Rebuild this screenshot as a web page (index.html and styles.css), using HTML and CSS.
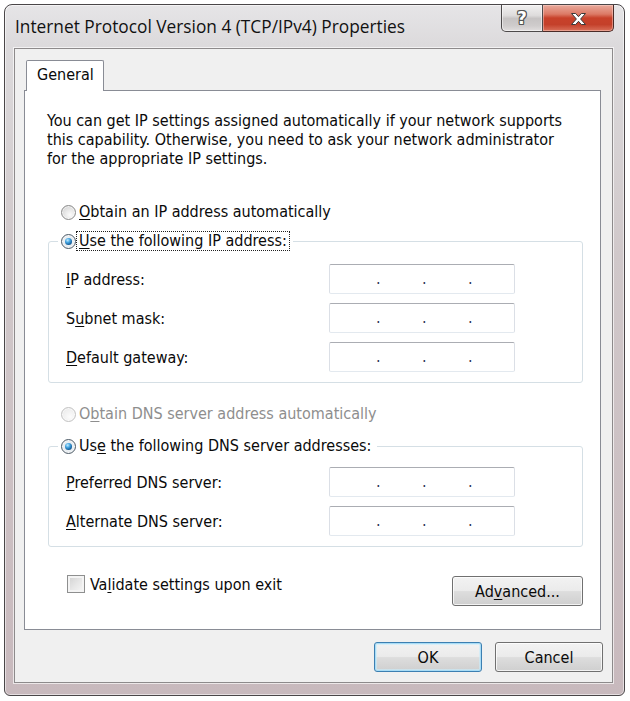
FILE: index.html
```html
<!DOCTYPE html>
<html>
<head>
<meta charset="utf-8">
<title>Internet Protocol Version 4 (TCP/IPv4) Properties</title>
<link rel="stylesheet" href="styles.css">
</head>
<body>
<div class="window">
  <div class="titlebar">
    <div class="title">Internet Protocol Version 4 (TCP/IPv4) Properties</div>
    <div class="caption-btns">
      <div class="cbtn help"><span class="qmark">?</span></div>
      <div class="cbtn close">
        <svg width="17" height="14" viewBox="0 0 17 14"><path d="M1.5 1.5h4.2l2.8 3.2 2.8-3.2h4.2l-4.9 5.5 4.9 5.5h-4.2l-2.8-3.2-2.8 3.2h-4.2l4.9-5.5z" fill="#fff" stroke="#3a3a3a" stroke-width="1" stroke-linejoin="round"/></svg>
      </div>
    </div>
  </div>
  <div class="client">
    <div class="tabs"><div class="tab">General</div></div>
    <div class="panel">
      <p class="intro">You can get IP settings assigned automatically if your network supports<br>this capability. Otherwise, you need to ask your network administrator<br>for the appropriate IP settings.</p>

      <div class="radio-row r-auto-ip"><span class="radio"></span><span class="rlabel"><u>O</u>btain an IP address automatically</span></div>

      <fieldset class="group g-ip">
        <legend><span class="radio checked"></span><span class="rlabel focus"><u>U</u>se the following IP address:</span></legend>
        <div class="rows">
          <div class="field-row"><span class="flabel"><u>I</u>P address:</span><div class="ipbox"><span class="seg first"></span><span class="dot">.</span><span class="seg"></span><span class="dot">.</span><span class="seg"></span><span class="dot">.</span><span class="seg"></span></div></div>
          <div class="field-row"><span class="flabel">S<u>u</u>bnet mask:</span><div class="ipbox"><span class="seg first"></span><span class="dot">.</span><span class="seg"></span><span class="dot">.</span><span class="seg"></span><span class="dot">.</span><span class="seg"></span></div></div>
          <div class="field-row"><span class="flabel"><u>D</u>efault gateway:</span><div class="ipbox"><span class="seg first"></span><span class="dot">.</span><span class="seg"></span><span class="dot">.</span><span class="seg"></span><span class="dot">.</span><span class="seg"></span></div></div>
        </div>
      </fieldset>

      <div class="radio-row r-auto-dns disabled"><span class="radio"></span><span class="rlabel">O<u>b</u>tain DNS server address automatically</span></div>

      <fieldset class="group g-dns">
        <legend><span class="radio checked"></span><span class="rlabel">Us<u>e</u> the following DNS server addresses:</span></legend>
        <div class="rows">
          <div class="field-row"><span class="flabel"><u>P</u>referred DNS server:</span><div class="ipbox"><span class="seg first"></span><span class="dot">.</span><span class="seg"></span><span class="dot">.</span><span class="seg"></span><span class="dot">.</span><span class="seg"></span></div></div>
          <div class="field-row"><span class="flabel"><u>A</u>lternate DNS server:</span><div class="ipbox"><span class="seg first"></span><span class="dot">.</span><span class="seg"></span><span class="dot">.</span><span class="seg"></span><span class="dot">.</span><span class="seg"></span></div></div>
        </div>
      </fieldset>

      <div class="bottom-row">
        <div class="check-row"><span class="checkbox"></span><span class="clabel">Va<u>l</u>idate settings upon exit</span></div>
        <button class="btn advanced" type="button">Ad<u>v</u>anced...</button>
      </div>
    </div>
    <div class="dialog-btns">
      <button class="btn default" type="button">OK</button>
      <button class="btn" type="button">Cancel</button>
    </div>
  </div>
</div>
</body>
</html>
```
FILE: styles.css
```css
* { box-sizing: border-box; }

html, body {
  margin: 0;
  padding: 0;
  background: #ffffff;
}

body {
  font-family: "DejaVu Sans Condensed", "Liberation Sans", sans-serif;
  font-size: 16px;
  color: #0a0a0a;
}

u {
  text-decoration-thickness: 1px;
  text-underline-offset: 2px;
}

/* ---------- window frame ---------- */
.window {
  margin: 4px 0 0 4px;
  width: 621px;
  height: 692px;
  border: 1px solid #4a4648;
  border-radius: 8px 8px 6px 6px;
  background: linear-gradient(180deg, #e6e5e7 0px, #dcdadc 40px, #d0c8ca 250px, #c8b9bd 100%);
  box-shadow: inset 0 0 0 1px rgba(255, 255, 255, 0.55);
  padding: 0 11px 12px 9px;
  display: flex;
  flex-direction: column;
}

.titlebar {
  height: 43px;
  display: flex;
  justify-content: space-between;
  align-items: flex-start;
}

.title {
  margin-top: 11px;
  margin-left: 1px;
  font-family: "Open Sans", "Noto Sans", sans-serif;
  font-size: 17.3px;
  line-height: 22px;
  color: #111111;
}

.caption-btns {
  display: flex;
  height: 27px;
  margin-right: -1px;
}

.cbtn {
  height: 27px;
  display: flex;
  align-items: center;
  justify-content: center;
  border: 1px solid #4d4a4b;
  border-top: none;
}

.help {
  width: 42px;
  border-radius: 0 0 0 5px;
  background: linear-gradient(180deg, #f1f0f0 0%, #dedcdc 40%, #c6c3c3 52%, #cfcccc 80%, #e1dede 100%);
  box-shadow: inset 0 0 0 1px rgba(255, 255, 255, 0.5);
}

.qmark {
  font-family: "DejaVu Sans", sans-serif;
  font-weight: bold;
  font-size: 17px;
  line-height: 1;
  color: #ffffff;
  text-shadow: 1px 0 0 #555, -1px 0 0 #555, 0 1px 0 #555, 0 -1px 0 #555, 1px 1px 0 #555, -1px -1px 0 #555, 1px -1px 0 #555, -1px 1px 0 #555;
  margin-top: 1px;
}

.close {
  width: 71px;
  border-left: none;
  border-color: #4a2b28;
  border-radius: 0 0 5px 0;
  background: linear-gradient(180deg, #e9aa9c 0%, #dc7a66 35%, #c8412a 50%, #c4402a 75%, #d9705a 100%);
  box-shadow: inset 0 0 0 1px rgba(255, 220, 210, 0.45);
}

.close svg { display: block; margin-top: 1px; }

/* ---------- client area ---------- */
.client {
  flex: 1;
  display: flex;
  flex-direction: column;
  background: #f0f0f0;
  border: 1px solid #8d8a8b;
  box-shadow: 0 0 0 1px rgba(255, 255, 255, 0.65);
  padding: 11px 11px 10px 9px;
}

.tabs {
  display: flex;
  padding-left: 2px;
}

.tab {
  position: relative;
  z-index: 1;
  width: 78px;
  height: 31px;
  margin-bottom: -1px;
  background: #ffffff;
  border: 1px solid #898c95;
  border-bottom: none;
  border-radius: 2px 2px 0 0;
  padding-left: 10px;
  line-height: 27px;
}

.panel {
  flex: 1;
  background: #ffffff;
  border: 1px solid #898c95;
  padding: 0 17px 0 23px;
  display: flex;
  flex-direction: column;
}

.intro {
  margin: 20px 0 0 -1px;
  line-height: 19px;
  white-space: nowrap;
}

/* ---------- radios ---------- */
.radio-row {
  display: flex;
  align-items: center;
  height: 20px;
  padding-left: 13px;
}

.r-auto-ip { margin-top: 34px; }
.r-auto-dns { margin-top: 21px; }

.radio {
  width: 15px;
  height: 15px;
  flex: none;
  border-radius: 50%;
  border: 1px solid #8a8a8a;
  background: radial-gradient(circle at 62% 68%, #fbfbfb 0%, #e2e2e2 55%, #c9c9c9 100%);
  box-shadow: inset 0 0 0 1px rgba(255, 255, 255, 0.6);
  display: flex;
  align-items: center;
  justify-content: center;
}

.radio-row .radio { margin-right: 3px; }

.radio.checked {
  border-color: #4d5a66;
  background: radial-gradient(circle at 50% 50%, #f4f7f9 0%, #dfe5ea 100%);
}

.radio.checked::after {
  content: "";
  width: 7px;
  height: 7px;
  border-radius: 50%;
  background: radial-gradient(circle at 38% 32%, #c4ecff 0%, #46a6e2 35%, #15609c 70%, #0e3e6b 100%);
}

.disabled { color: #8e8e8e; }

.disabled .radio {
  border-color: #c2c2c2;
  background: radial-gradient(circle at 62% 68%, #fcfcfc 0%, #efefef 60%, #e4e4e4 100%);
}

.rlabel {
  line-height: 18px;
}

legend .rlabel {
  border: 1px dotted transparent;
  padding: 0 2px;
}

legend .rlabel.focus {
  border-color: #202020;
}

/* ---------- group boxes ---------- */
.group {
  margin: 0;
  border: 1px solid #d5dfe5;
  border-radius: 3px;
  padding: 14px 0 10px 0;
  min-width: 0;
}

.g-ip { margin-top: 9px; padding-top: 13px; }
.g-dns { margin-top: 12px; padding-top: 11px; }

legend {
  display: flex;
  align-items: center;
  height: 20px;
  margin-left: 9px;
  padding: 0 3px 0 3px;
}

.rows {
  display: flex;
  flex-direction: column;
  gap: 9px;
}

.field-row {
  display: flex;
  align-items: center;
  height: 30px;
  padding-left: 17px;
}

.flabel {
  width: 263px;
  flex: none;
}

.ipbox {
  width: 186px;
  height: 30px;
  display: flex;
  background: #ffffff;
  border: 1px solid #dbdfe6;
  border-top-color: #abadb3;
  border-bottom-color: #e3e9ef;
  border-radius: 2px;
  line-height: 28px;
  color: #2e3358;
}

.seg { width: 42px; flex: none; }
.seg.first { width: 46px; }
.dot { width: 4px; flex: none; text-align: center; }

/* ---------- bottom area ---------- */
.bottom-row {
  display: flex;
  justify-content: space-between;
  align-items: flex-start;
  margin-top: 27px;
}

.check-row {
  display: flex;
  align-items: center;
  height: 20px;
  margin-left: 19px;
}

.checkbox {
  width: 18px;
  height: 18px;
  margin-right: 5px;
  border: 1px solid #8e8f8f;
  background: linear-gradient(135deg, #cfcfcf 0%, #e6e6e6 50%, #f7f7f7 100%);
  box-shadow: inset 0 0 0 2px #f4f4f4;
}

.btn {
  font: inherit;
  color: #0a0a0a;
  height: 30px;
  padding: 0;
  border: 1px solid #707070;
  border-radius: 3px;
  background: linear-gradient(180deg, #f2f2f2 0%, #ebebeb 48%, #dddddd 52%, #cfcfcf 100%);
  box-shadow: inset 0 0 0 1px rgba(255, 255, 255, 0.75);
}

.advanced {
  width: 131px;
  margin-top: 2px;
}

.dialog-btns {
  display: flex;
  justify-content: flex-end;
  gap: 13px;
  margin-top: 12px;
  margin-right: -2px;
}

.dialog-btns .btn { width: 108px; }

.btn.default {
  border-color: #3c7fb1;
  box-shadow: inset 0 0 0 1px #a8dcf6, inset 0 0 0 2px rgba(200, 236, 252, 0.6);
}
```
